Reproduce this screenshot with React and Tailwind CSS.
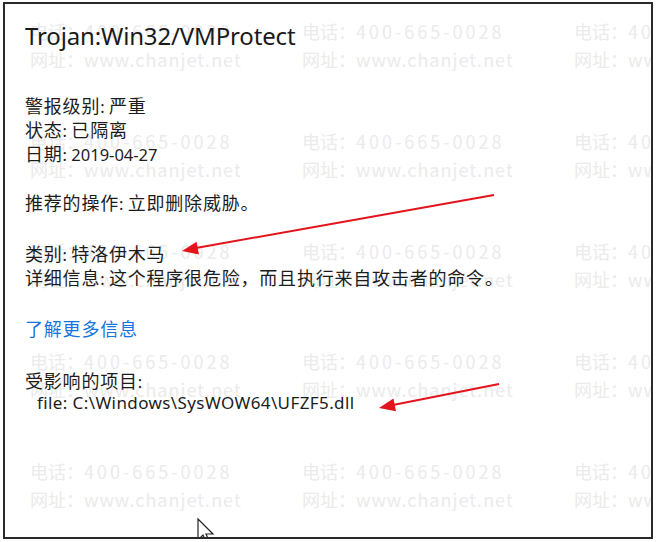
import React from "react";

const L = ({ children }) => (
  <span className="font-['Noto_Sans'] text-[16.5px] leading-none tracking-normal">{children}</span>
);

function Tile() {
  return (
    <div className="flex flex-col leading-[28px] text-[18px] text-[#ebebeb] font-['Noto_Sans_CJK_SC',sans-serif] whitespace-nowrap">
      <div>
        电话：<span className="tracking-[3px]">400-665-0028</span>
      </div>
      <div>
        网址：<span className="tracking-[1px]">www.chanjet.net</span>
      </div>
    </div>
  );
}

export default function App() {
  const tiles = Array.from({ length: 15 });
  return (
    <div className="relative w-[656px] h-[542px] bg-white overflow-hidden">
      <div className="relative ml-[3px] mt-[2px] w-[650px] h-[537px] border-2 border-[#2a2a2a] bg-white overflow-hidden">
        <div className="absolute left-[25px] top-[13px] grid grid-cols-[repeat(3,272px)] auto-rows-[110px]">
          {tiles.map((_, i) => (
            <Tile key={i} />
          ))}
        </div>
        <div className="relative z-10 pl-[20px] pt-[16px] text-[#1c1c1c] font-['Noto_Sans_CJK_SC',sans-serif] text-[18px] leading-[24px] tracking-[0.8px] whitespace-nowrap">
          <div className="font-['Noto_Sans',sans-serif] text-[24px] leading-[32px] tracking-[-0.15px] text-[#1a1a1a]">
            Trojan:Win32/VMProtect
          </div>
          <div className="mt-[41px]">
            警报级别<L>: </L>严重
          </div>
          <div>
            状态<L>: </L>已隔离
          </div>
          <div>
            日期<L>: 2019-04-27</L>
          </div>
          <div className="mt-[25px]">
            推荐的操作<L>: </L>立即删除威胁。
          </div>
          <div className="mt-[27px]">
            类别<L>: </L>特洛伊木马
          </div>
          <div>
            详细信息<L>: </L>这个程序很危险，而且执行来自攻击者的命令。
          </div>
          <div className="mt-[27px] text-[#1474e0]">了解更多信息</div>
          <div className="mt-[28px]">
            受影响的项目<L>:</L>
          </div>
          <div className="pl-[12px] -mt-[1px] font-['Noto_Sans',sans-serif] text-[17px] tracking-[0.4px]">
            file: C:\Windows\SysWOW64\UFZF5.dll
          </div>
        </div>
      </div>
      <svg
        className="absolute inset-0 z-20 pointer-events-none"
        width="656"
        height="542"
        viewBox="0 0 656 542"
      >
        <line x1="494" y1="195" x2="196" y2="248" stroke="#e3141b" strokeWidth="2" />
        <polygon points="182,251 198.9,254.6 196.6,241.8" fill="#e3141b" />
        <line x1="499" y1="384" x2="393" y2="405" stroke="#e3141b" strokeWidth="2" />
        <polygon points="379,408 396,411.3 393.4,398.5" fill="#e3141b" />
        <defs>
          <clipPath id="cur">
            <rect x="0" y="0" width="656" height="537" />
          </clipPath>
        </defs>
        <g clipPath="url(#cur)">
          <polygon
            points="198,519 198,540 203,535 207,544 210,543 206,534 213,534"
            fill="#ffffff"
            stroke="#222"
            strokeWidth="1.2"
            strokeLinejoin="miter"
          />
        </g>
      </svg>
    </div>
  );
}
